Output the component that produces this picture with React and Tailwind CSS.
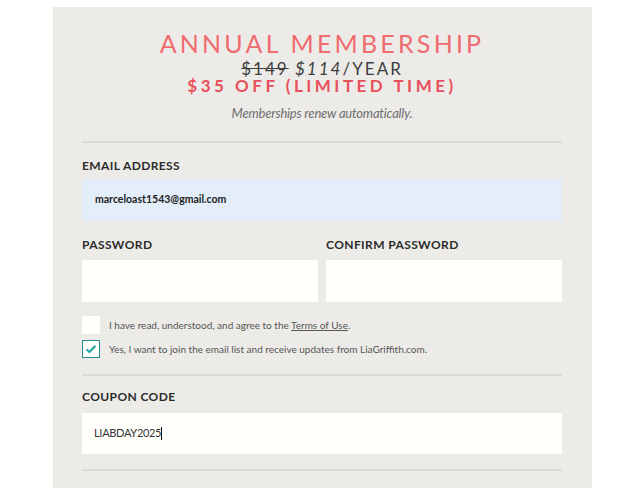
import React from "react";

export default function App() {
  return (
    <div className="w-[640px] h-[488px] bg-[#fffffd] overflow-hidden" style={{ fontFamily: "Lato, 'Open Sans', sans-serif" }}>
      <div className="ml-[53px] mt-[7px] w-[539px] h-[481px] bg-[#ecebe8] pl-[29px] pr-[30px]">
        <div className="pt-[19px] text-center">
          <div className="text-[25px] leading-[34px] font-normal tracking-[3.2px] text-[#f06b70]">ANNUAL MEMBERSHIP</div>
          <div className="text-[17px] leading-[18px] tracking-[2px] text-[#3d3d3d]">
            <span className="line-through">$149</span>{" "}
            <span className="italic">$114</span>/YEAR
          </div>
          <div className="mt-[1px] text-[17px] leading-[14px] font-bold tracking-[3.5px] text-[#e8505b]">$35 OFF (LIMITED TIME)</div>
          <div className="mt-[11px] text-[13px] leading-[18px] italic text-[#6f6f6f] tracking-[-0.2px]">Memberships renew automatically.</div>
        </div>
        <div className="mt-[19px] h-[2px] bg-[#dbdad6]" />
        <div className="mt-[15px] text-[12px] leading-[16px] font-bold tracking-[0.4px] text-[#2b2b2b]">EMAIL ADDRESS</div>
        <div className="mt-[5px] h-[42px] bg-[#e4eefb] flex items-center pl-[13px] text-[10.5px] font-bold text-[#222]">marceloast1543@gmail.com</div>
        <div className="mt-[16px] grid grid-cols-2 gap-[8px]">
          <div>
            <div className="text-[12px] leading-[16px] font-bold tracking-[0.4px] text-[#2b2b2b]">PASSWORD</div>
            <div className="mt-[7px] h-[42px] bg-[#fffffc]" />
          </div>
          <div>
            <div className="text-[12px] leading-[16px] font-bold tracking-[0.4px] text-[#2b2b2b]">CONFIRM PASSWORD</div>
            <div className="mt-[7px] h-[42px] bg-[#fffffc]" />
          </div>
        </div>
        <div className="mt-[14px] flex items-center gap-[9px]">
          <div className="w-[18px] h-[18px] bg-[#fffffc]" />
          <div className="text-[10px] text-[#555]">
            I have read, understood, and agree to the <span className="underline">Terms of Use</span>.
          </div>
        </div>
        <div className="mt-[6px] flex items-center gap-[9px]">
          <div className="w-[18px] h-[18px] bg-[#fffffc] border border-[#2a8c93] flex items-center justify-center">
            <svg width="12" height="10" viewBox="0 0 12 10"><path d="M1.5 5.2 L4.5 8 L10.5 1.8" fill="none" stroke="#1fa6a6" strokeWidth="2" /></svg>
          </div>
          <div className="text-[10px] text-[#555]">Yes, I want to join the email list and receive updates from LiaGriffith.com.</div>
        </div>
        <div className="mt-[16px] h-[2px] bg-[#dbdad6]" />
        <div className="mt-[13px] text-[12px] leading-[16px] font-bold tracking-[0.4px] text-[#2b2b2b]">COUPON CODE</div>
        <div className="mt-[8px] h-[41px] bg-[#fffffc] flex items-center pl-[12px] text-[11px] text-[#333] tracking-[-0.3px]">
          LIABDAY2025<span className="inline-block w-[1px] h-[13px] bg-[#111]" />
        </div>
        <div className="mt-[15px] h-[2px] bg-[#dbdad6]" />
      </div>
    </div>
  );
}
